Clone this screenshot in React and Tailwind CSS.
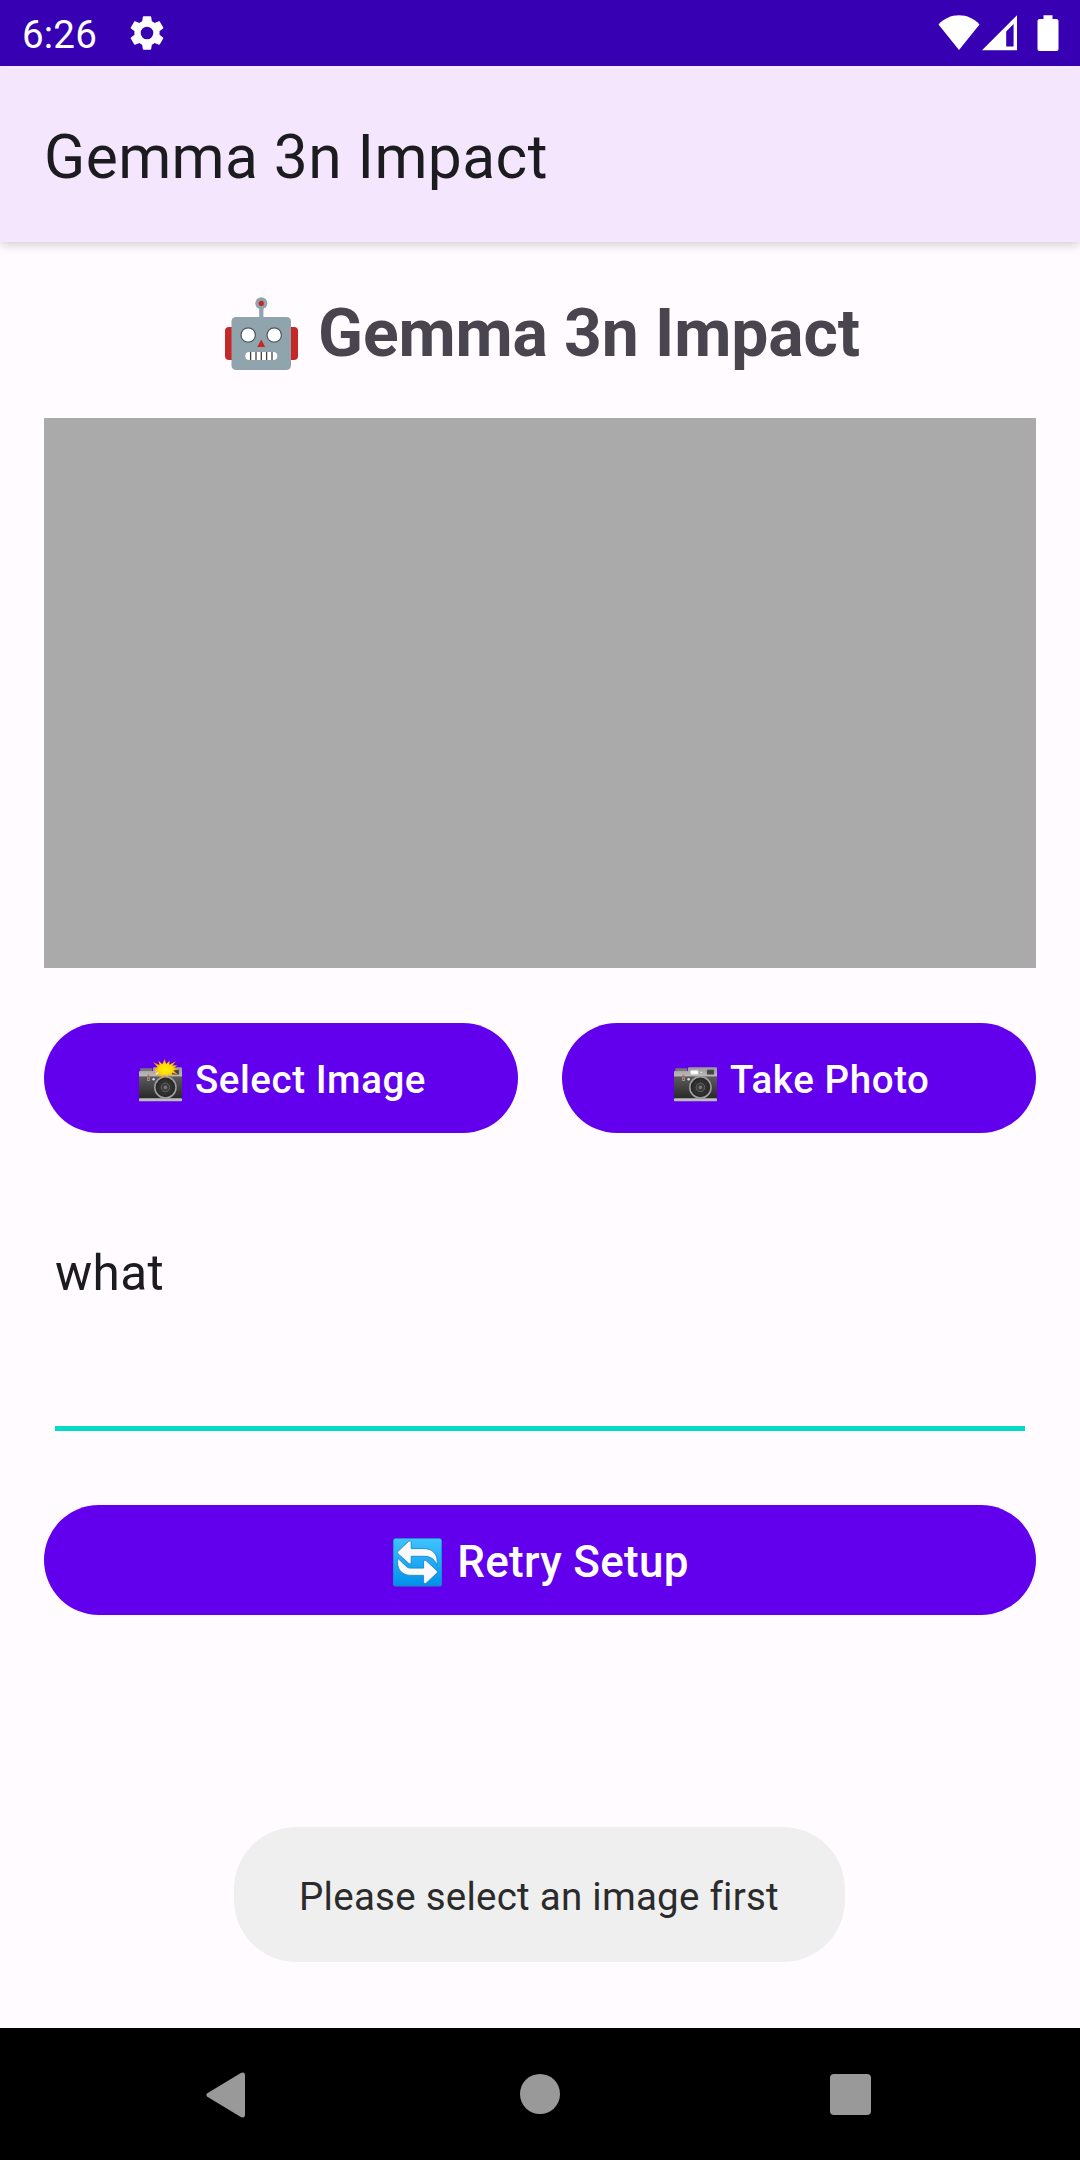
function GearIcon() {
  return (
    <svg className="ml-[29px] h-[42px] w-[42px] shrink-0" viewBox="0 0 24 24" fill="#fff">
      <path d="M19.14 12.94c.04-.3.06-.61.06-.94 0-.32-.02-.64-.07-.94l2.03-1.58c.18-.14.23-.41.12-.61l-1.92-3.32c-.12-.22-.37-.29-.59-.22l-2.39.96c-.5-.38-1.03-.7-1.62-.94l-.36-2.54c-.04-.24-.24-.41-.48-.41h-3.84c-.24 0-.43.17-.47.41l-.36 2.54c-.59.24-1.13.57-1.62.94l-2.39-.96c-.22-.08-.47 0-.59.22L2.74 8.87c-.12.21-.08.47.12.61l2.03 1.58c-.05.3-.09.63-.09.94s.02.64.07.94l-2.03 1.58c-.18.14-.23.41-.12.61l1.92 3.32c.12.22.37.29.59.22l2.39-.96c.5.38 1.03.7 1.62.94l.36 2.54c.05.24.24.41.48.41h3.84c.24 0 .44-.17.47-.41l.36-2.54c.59-.24 1.13-.56 1.62-.94l2.39.96c.22.08.47 0 .59-.22l1.92-3.32c.12-.22.07-.47-.12-.61l-2.01-1.58zM12 15.6A3.6 3.6 0 1 1 12 8.4a3.6 3.6 0 0 1 0 7.2z" />
    </svg>
  );
}

function StatusBar() {
  return (
    <header className="flex h-[66px] items-center bg-[#3700b3] pl-[22px] pr-[21px]">
      <span className="pt-[3px] text-[38.5px] leading-[46px] tracking-[0.2px] text-white">6:26</span>
      <GearIcon />
      <div className="ml-auto flex items-center">
        <svg className="h-[36px] w-[42px]" viewBox="0 0 42 36" fill="#fff">
          <path d="M0.5 9.5C6 3.6 13 .3 21 .3S36 3.6 41.5 9.5L21 35Z" />
        </svg>
        <svg className="ml-[2px] h-[36px] w-[36px]" viewBox="0 0 36 36" fill="#fff" fillRule="evenodd">
          <path d="M0 35.2L35 .2V35.2ZM24.2 16.5V31.4H31.6V9.1Z" />
        </svg>
        <svg className="ml-[19px] h-[36px] w-[22px]" viewBox="0 0 22 36" fill="#fff">
          <path d="M6.5 0.3H15.5V4H19.5Q21.5 4 21.5 6V34Q21.5 36 19.5 36H2.5Q.5 36 .5 34V6Q.5 4 2.5 4H6.5Z" />
        </svg>
      </div>
    </header>
  );
}

function RobotIcon() {
  return (
    <svg className="ml-[5px] h-[74px] w-[74px] shrink-0" viewBox="0 0 74 74">
      <rect x="0" y="30" width="20" height="33" rx="4" fill="#c62828" />
      <rect x="53" y="30" width="20" height="33" rx="4" fill="#c62828" />
      <rect x="34.2" y="8" width="4.2" height="16" fill="#90a4ae" />
      <circle cx="36.3" cy="6.2" r="6" fill="#90a4ae" />
      <circle cx="36.3" cy="6.4" r="2.6" fill="#c62828" />
      <rect x="6.5" y="20" width="59.5" height="53" rx="4.5" fill="#90a4ae" />
      <circle cx="23.2" cy="38" r="7.2" fill="#fff" stroke="#4b565b" strokeWidth="1.2" />
      <circle cx="49.2" cy="38" r="7.2" fill="#fff" stroke="#4b565b" strokeWidth="1.2" />
      <path d="M36.2 42.5L40.2 50H32.2Z" fill="#c62828" />
      <rect x="20.3" y="55" width="32" height="8" rx="4" fill="#fff" />
      <path d="M25.6 55v8M31 55v8M36.3 55v8M41.6 55v8M47 55v8" stroke="#424242" strokeWidth="1.3" />
    </svg>
  );
}

function CameraIcon({ flash = false }) {
  const id = flash ? "flash" : "plain";
  return (
    <svg className="mt-1 h-[43px] w-[43px] shrink-0" viewBox="0 0 43 43">
      <defs>
        <linearGradient id={`body-${id}`} x1="0" y1="0" x2="0" y2="1">
          <stop offset="0" stopColor="#5c5c5c" />
          <stop offset="1" stopColor="#262626" />
        </linearGradient>
        <linearGradient id={`top-${id}`} x1="0" y1="0" x2="0" y2="1">
          <stop offset="0" stopColor="#9a9a9a" />
          <stop offset="1" stopColor="#bdbdbd" />
        </linearGradient>
        <radialGradient id={`burst-${id}`}>
          <stop offset="0" stopColor="#fff200" />
          <stop offset="0.5" stopColor="#ffdc0a" />
          <stop offset="1" stopColor="#f08c00" />
        </radialGradient>
      </defs>
      <rect x="1.2" y="9.3" width="12" height="4" rx="0.8" fill="#757575" />
      <path d="M0 13Q0 12 1 12H14V9.2Q14 8.2 15 8.2H42Q43 8.2 43 9.2V18H0Z" fill={`url(#top-${id})`} />
      <rect x="0" y="17.4" width="43" height="23" fill={`url(#body-${id})`} />
      <rect x="0" y="39.2" width="43" height="3" rx="0.8" fill="#bdbdbd" />
      <rect x="33" y="10.8" width="7" height="4.6" rx="0.6" fill="#424242" stroke="#777" strokeWidth="0.5" />
      <rect x="16.7" y="11.6" width="7.4" height="3.6" rx="0.6" fill="#fff" stroke="#d8d8d8" strokeWidth="0.7" />
      <circle cx="27.4" cy="13.4" r="1.2" fill="#e5e5e5" stroke="#888" strokeWidth="0.4" />
      <rect x="8.2" y="15.5" width="2.6" height="6.6" rx="1.2" fill="#9e9e9e" />
      <circle cx="9.5" cy="17.6" r="1.1" fill="#e53935" />
      <circle cx="9.5" cy="20.3" r="0.7" fill="#555" />
      <circle cx="14.6" cy="20.2" r="1.2" fill="#e0e0e0" />
      <circle cx="26.4" cy="28.4" r="10.6" fill="#303030" stroke="#a0a0a0" strokeWidth="1.5" />
      <circle cx="26.4" cy="28.4" r="8.8" fill="#303030" stroke="#222" strokeWidth="0.8" />
      <circle cx="26.4" cy="28.4" r="4.3" fill="#3c3c3c" stroke="#626262" strokeWidth="1" />
      <circle cx="26.4" cy="28.4" r="1.8" fill="#777" />
      {flash && (
        <path
          d="M25.6 0L27.2 5L30.6 1.4L30.4 5.8L37 2L33.4 6.6L38.6 6L34.6 9L39.8 10.4L34.4 11.4L39.2 15.8L32.4 13.6L34.3 18L29.4 15L28.4 18.2L26 15.2L22.2 20.2L22 15L17.6 17.4L19.8 13.3L13.4 14.8L18.4 11.2L14 9.4L18.9 8.4L14 3.1L20.6 6.2L19.3 1.4L23.4 5.2Z"
          fill={`url(#burst-${id})`}
        />
      )}
    </svg>
  );
}

function RefreshIcon() {
  return (
    <svg className="ml-[2px] mt-1 h-[49px] w-[49px] shrink-0" viewBox="0 0 49 49">
      <defs>
        <linearGradient id="refresh-tile" x1="0" y1="0" x2="0" y2="1">
          <stop offset="0" stopColor="#40c4ff" />
          <stop offset="1" stopColor="#0091ea" />
        </linearGradient>
      </defs>
      <rect x="0" y="0.2" width="49" height="48.2" rx="2.2" fill="#1c86c8" />
      <rect x="0.7" y="0.7" width="47.6" height="46.6" rx="1.8" fill="url(#refresh-tile)" />
      <g fill="#fafafa" stroke="#1787c9" strokeWidth="0.9" strokeLinejoin="round">
        <path d="M4.8 13.4L15.5 3.4Q18.2 1.8 18.2 4.8V10.6H31C39.5 10.6 44.2 16 44.2 23.5V27.6C42 22 38.2 18.3 31.6 18.3H18.2V24Q18.2 27 15.5 25.2L4.8 15.6Q3.8 14.5 4.8 13.4Z" />
        <path d="M44 35L33.3 45Q30.6 46.6 30.6 43.6V37.4H18C9.4 37.4 4.6 32 4.6 24.5V20.1L12.4 27.6C13.7 29.1 15.2 30.1 17.6 30.1H30.6V24Q30.6 21 33.3 22.8L44 32.8Q45 33.9 44 35Z" />
      </g>
    </svg>
  );
}

function NavigationBar() {
  return (
    <nav className="flex h-[132px] items-center justify-between bg-black pl-[206px] pr-[209px]">
      <svg className="mt-px h-[46px] w-[40px]" viewBox="0 0 40 46" fill="#999">
        <path d="M1.3 21.3L34.8 .9Q39 -.7 39 3.5V42.5Q39 46.7 34.8 45.1L1.3 24.7Q-.7 23 1.3 21.3Z" />
      </svg>
      <span className="ml-1 h-10 w-10 rounded-full bg-[#999]" />
      <span className="h-[41px] w-[41px] rounded-[4px] bg-[#999]" />
    </nav>
  );
}

export default function App() {
  return (
    <div className="flex h-[2160px] w-[1080px] flex-col bg-[#fffbff] font-['Roboto',sans-serif]">
      <StatusBar />
      <div className="h-[176px] bg-[#f3e6fd] pl-[44px] pt-[56px] shadow-[0_3px_10px_rgba(0,0,0,0.18)]">
        <h1 className="text-[60.5px] leading-[72px] tracking-[0.42px] text-[#1c1b1f]">Gemma 3n Impact</h1>
      </div>
      <main className="flex flex-1 flex-col px-11 pt-[44px]">
        <h2 className="flex h-[95px] items-center justify-center text-[66px] font-bold leading-[95px] tracking-[-0.12px] text-[#49454f]">
          <RobotIcon />
          <span className="ml-[19px] whitespace-nowrap">Gemma 3n Impact</span>
        </h2>
        <div className="mt-[37px] h-[550px] bg-[#aaaaaa]" />
        <div className="mt-[55px] grid grid-cols-2 gap-11">
          <button className="flex h-[110px] items-center justify-center rounded-full bg-[#6200ee] pl-[3px] text-[38.5px] font-medium tracking-[0.55px] text-white">
            <CameraIcon flash />
            <span className="ml-[13px] pt-1">Select Image</span>
          </button>
          <button className="flex h-[110px] items-center justify-center rounded-full bg-[#6200ee] pl-[6px] text-[38.5px] font-medium tracking-[0.6px] text-white">
            <CameraIcon />
            <span className="ml-[12.5px] pt-1">Take Photo</span>
          </button>
        </div>
        <div className="mx-[11px] mt-[111px] h-[187px] border-b-[5px] border-[#03dac5] text-[49.5px] leading-[58px] tracking-[0.35px] text-[#1c1b1f]">
          what
        </div>
        <button className="mt-[74px] flex h-[110px] items-center justify-center rounded-full bg-[#6200ee] text-[44px] font-medium tracking-[0.3px] text-white">
          <RefreshIcon />
          <span className="ml-[15px] pt-1">Retry Setup</span>
        </button>
        <div className="mr-[2px] mt-[212px] flex h-[135px] w-[611px] items-center justify-center self-center rounded-[62px] bg-[#efefef] pt-1 text-[38.5px] tracking-[0.25px] [font-variant-ligatures:common-ligatures] text-[#2b2b2b]">
          Please select an image first
        </div>
      </main>
      <NavigationBar />
    </div>
  );
}
